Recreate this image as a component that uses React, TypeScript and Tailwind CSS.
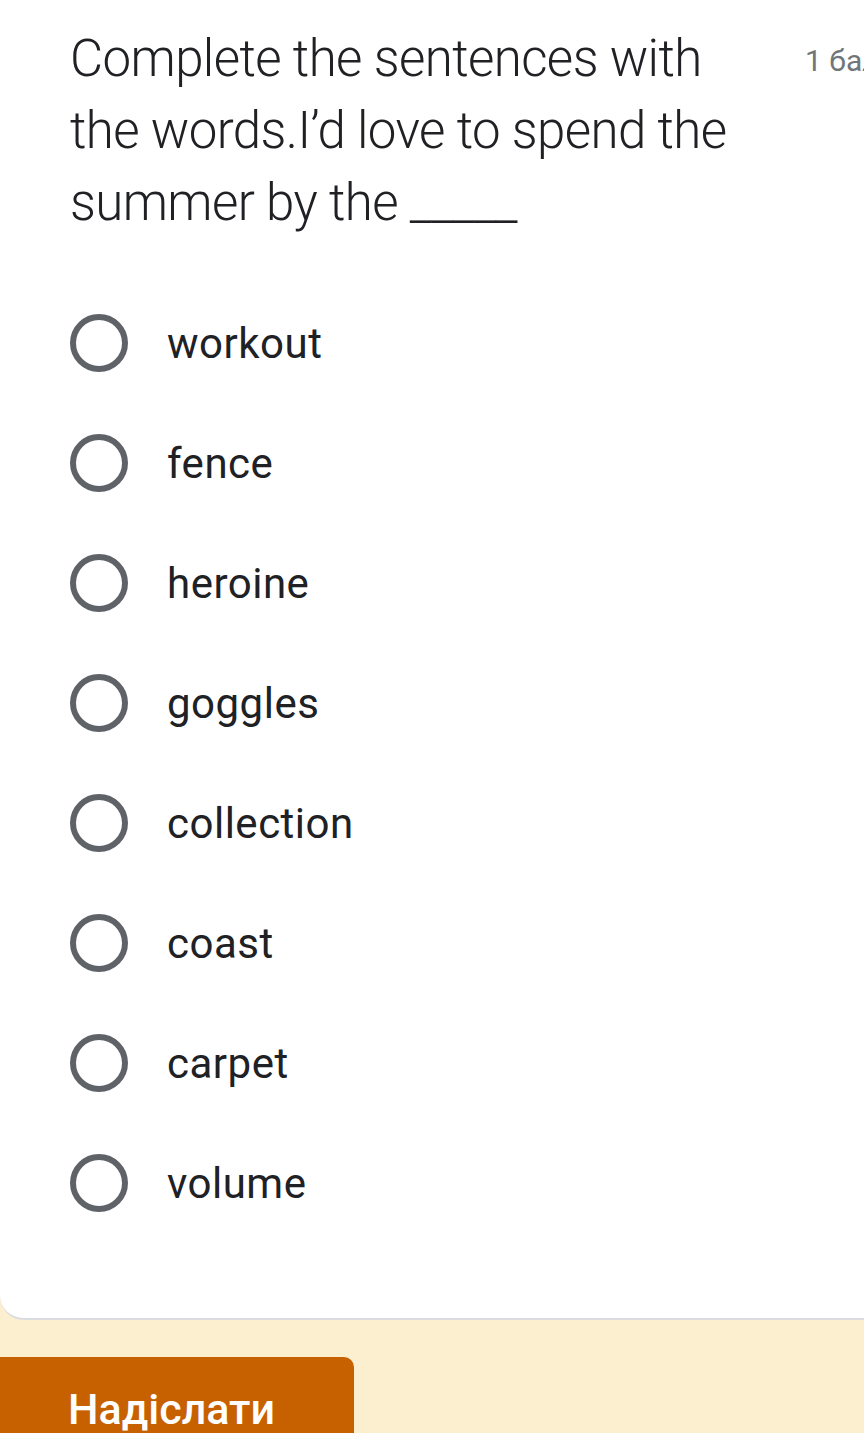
import React from "react";

const OPTIONS = ["workout", "fence", "heroine", "goggles", "collection", "coast", "carpet", "volume"];

function Radio() {
  return (
    <div className="w-[58px] h-[58px] rounded-full border-[6px] border-[#5f6368] shrink-0" />
  );
}

export default function App() {
  return (
    <div
      className="w-[864px] h-[1433px] overflow-hidden bg-[#fcefd0]"
      style={{ fontFamily: "Roboto, 'Noto Sans', sans-serif" }}
    >
      <div className="bg-white rounded-bl-[24px] border-b-2 border-[#dadce0] pb-[106px] w-[900px]">
        <div className="flex items-start pl-[70px] pt-[23px]">
          <div className="w-[680px] text-[51px] font-light leading-[72px] text-[#202124] tracking-[-0.6px]">
            Complete the sentences with the words.I’d love to spend the summer by the _____
          </div>
          <div className="ml-[55px] mt-[20px] text-[30px] leading-[36px] text-[#70757a] whitespace-nowrap">
            1 бал
          </div>
        </div>
        <div className="flex flex-col pl-[70px] pt-[75px] gap-[62px]">
          {OPTIONS.map((o) => (
            <div key={o} className="flex items-center gap-[39px] h-[58px]">
              <Radio />
              <span className="text-[42px] text-[#202124] tracking-[0.5px]">{o}</span>
            </div>
          ))}
        </div>
      </div>
      <div className="pt-[37px]">
        <button className="w-[354px] h-[100px] bg-[#c76100] rounded-tr-[10px] text-white text-[43px] font-medium text-left pl-[68px] flex items-start leading-[48px]">
          <span className="mt-[28px]">Надіслати</span>
        </button>
      </div>
    </div>
  );
}
